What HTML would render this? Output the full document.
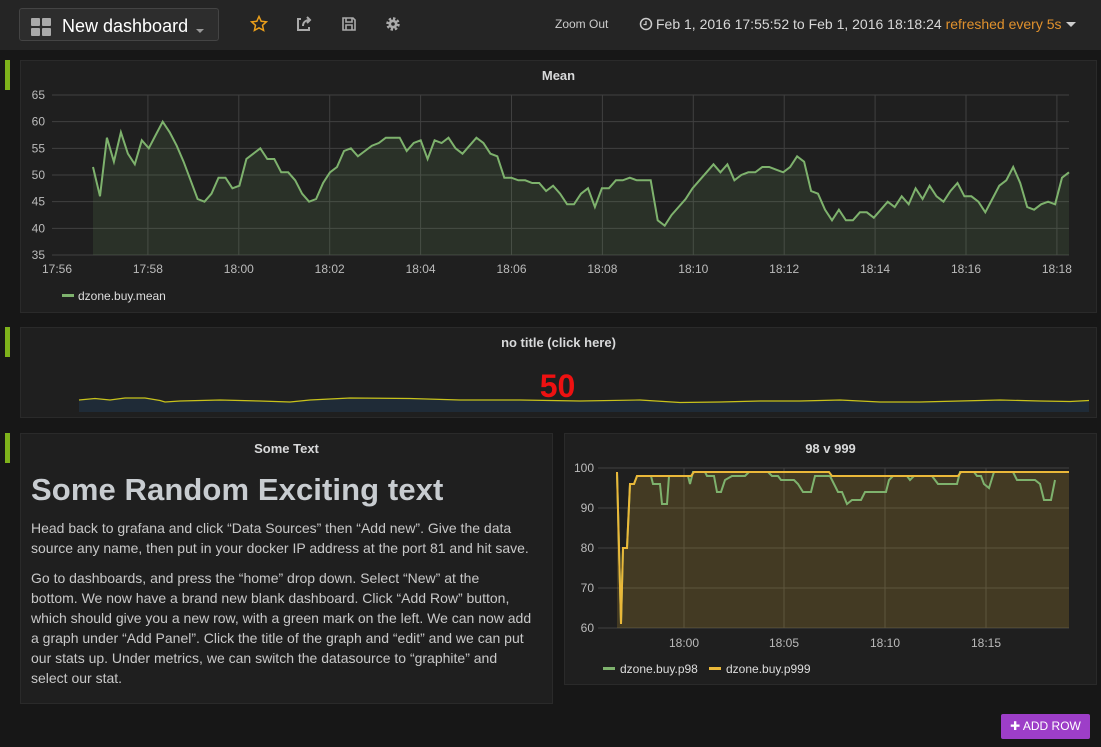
<!DOCTYPE html>
<html><head><meta charset="utf-8"><style>
*{margin:0;padding:0;box-sizing:border-box}
body{width:1101px;height:747px;background:#171717;font-family:"Liberation Sans",sans-serif;color:#c8c8c8;position:relative;overflow:hidden}
.top{position:absolute;left:0;top:0;width:1101px;height:50px;background:#252525}
.dd{position:absolute;left:19px;top:8px;width:200px;height:33px;border:1px solid #444;border-radius:3px;background:#2d2d2d}
.dd .t{position:absolute;left:42px;top:7px;font-size:18px;color:#fff}
.sq{position:absolute;width:9px;height:8px;background:#aaa;border-radius:1px}
.panel{position:absolute;background:#1f1f1f;border:1px solid #2a2a2a}
.mark{position:absolute;left:5px;width:5px;height:30px;background:#7eb21b}
.ttl{position:absolute;width:100%;text-align:center;font-weight:bold;font-size:13px;color:#d8d9da}
svg text{font-family:"Liberation Sans",sans-serif;font-size:12px;fill:#bbb}
p{font-size:14px;line-height:20px;color:#c8c8c8;white-space:nowrap}
</style></head><body>
<div class="top">
 <div class="dd">
  <div class="sq" style="left:11px;top:9px"></div><div class="sq" style="left:22px;top:9px"></div>
  <div class="sq" style="left:11px;top:19px"></div><div class="sq" style="left:22px;top:19px"></div>
  <div class="t">New dashboard</div>
  <div style="position:absolute;left:176px;top:20px;border-left:4px solid transparent;border-right:4px solid transparent;border-top:4px solid #999"></div>
 </div>
 <svg style="position:absolute;left:250px;top:15px" width="18" height="18" viewBox="0 0 18 18"><path d="M9 1.5l2.2 4.8 5.2.5-3.9 3.5 1.1 5.1L9 12.8l-4.6 2.6 1.1-5.1L1.6 6.8l5.2-.5z" fill="none" stroke="#eb9f1a" stroke-width="1.5"/></svg>
 <svg style="position:absolute;left:295px;top:15px" width="18" height="18" viewBox="0 0 18 18"><path d="M6 4H3v11h11v-3M8 11c0-4 3-6 7-6M12 2l3 3-3 3" fill="none" stroke="#aaa" stroke-width="2"/></svg>
 <svg style="position:absolute;left:340px;top:15px" width="18" height="18" viewBox="0 0 18 18"><path d="M3 3h10l2 2v10H3z M6 3v4h6V3 M6 10h6v5H6z" fill="none" stroke="#aaa" stroke-width="1.6"/></svg>
 <svg style="position:absolute;left:384px;top:15px" width="18" height="18" viewBox="0 0 18 18"><circle cx="9" cy="9" r="5" fill="none" stroke="#aaa" stroke-width="3.5" stroke-dasharray="2.2 1.7"/><circle cx="9" cy="9" r="4.5" fill="#aaa"/><circle cx="9" cy="9" r="1.8" fill="#252525"/></svg>
 <div style="position:absolute;left:555px;top:17px;font-size:12px;color:#ccc">Zoom Out</div>
 <svg style="position:absolute;left:639px;top:17px" width="14" height="14"><circle cx="7" cy="7" r="5.5" fill="none" stroke="#ccc" stroke-width="1.5"/><path d="M7 4v3.5H4.5" fill="none" stroke="#ccc" stroke-width="1.3"/></svg>
 <div style="position:absolute;left:656px;top:16px;font-size:14px;color:#d8d8d8;white-space:nowrap">Feb 1, 2016 17:55:52 to Feb 1, 2016 18:18:24 <span style="color:#e0912d">refreshed every 5s</span></div>
 <div style="position:absolute;left:1066px;top:22px;border-left:5px solid transparent;border-right:5px solid transparent;border-top:5px solid #ccc"></div>
</div>

<div class="mark" style="top:60px"></div>
<div class="panel" style="left:20px;top:60px;width:1077px;height:253px">
 <div class="ttl" style="top:7px">Mean</div>
</div>
<svg style="position:absolute;left:0;top:0" width="1101" height="320" id="s1"></svg>

<div class="mark" style="top:327px"></div>
<div class="panel" style="left:20px;top:327px;width:1077px;height:91px">
 <div class="ttl" style="top:7px">no title (click here)</div>
</div>
<svg style="position:absolute;left:0;top:320px" width="1101" height="100" id="s2"></svg>
<div style="position:absolute;left:0;width:1115px;top:368px;text-align:center;font-size:32px;font-weight:bold;color:#e11;">50</div>

<div class="mark" style="top:433px"></div>
<div class="panel" style="left:20px;top:433px;width:533px;height:271px">
 <div class="ttl" style="top:7px">Some Text</div>
 <div style="position:absolute;left:10px;top:38px;font-size:31px;font-weight:bold;color:#c8ccd0;letter-spacing:0.1px">Some Random Exciting text</div>
 <div style="position:absolute;left:10px;top:84px;width:520px">
  <p>Head back to grafana and click “Data Sources” then “Add new”. Give the data<br>source any name, then put in your docker IP address at the port 81 and hit save.</p>
  <p style="margin-top:10px">Go to dashboards, and press the “home” drop down. Select “New” at the<br>bottom. We now have a brand new blank dashboard. Click “Add Row” button,<br>which should give you a new row, with a green mark on the left. We can now add<br>a graph under “Add Panel”. Click the title of the graph and “edit” and we can put<br>our stats up. Under metrics, we can switch the datasource to “graphite” and<br>select our stat.</p>
 </div>
</div>
<div class="panel" style="left:564px;top:433px;width:533px;height:252px">
 <div class="ttl" style="top:7px">98 v 999</div>
</div>
<svg style="position:absolute;left:0;top:420px" width="1101" height="280" id="s3"></svg>

<div style="position:absolute;left:1001px;top:714px;width:89px;height:25px;background:#9d3ec8;border-radius:2px;color:#fff;font-size:12px;line-height:25px;text-align:center">✚ ADD ROW</div>

<script>
var NS='http://www.w3.org/2000/svg';
function el(svg,tag,a,txt){var e=document.createElementNS(NS,tag);for(var k in a)e.setAttribute(k,a[k]);if(txt!==undefined)e.textContent=txt;svg.appendChild(e);return e;}
var s1=document.getElementById('s1');
var Y1=function(v){return 255-(v-35)*5.333;};
el(s1,'rect',{x:57,y:95,width:1012,height:160,fill:'#1f1f1f'});
for(var v=35;v<=65;v+=5){var y=Y1(v);el(s1,'line',{x1:52,x2:1069,y1:y,y2:y,stroke:'#404040'});el(s1,'text',{x:45,y:y+4,'text-anchor':'end'},v);}
var xl=['17:56','17:58','18:00','18:02','18:04','18:06','18:08','18:10','18:12','18:14','18:16','18:18'];
for(var i=0;i<12;i++){var x=57+i*90.9;if(i>0)el(s1,'line',{x1:x,x2:x,y1:95,y2:255,stroke:'#404040'});el(s1,'text',{x:x,y:273,'text-anchor':'middle'},xl[i]);}
var d1=[51.5,46,57,52.5,58,54,52,56.5,55,57.5,60,58,55.5,52.5,49,45.5,45,46.5,49.5,49.5,47.5,48,53,54,55,53,53,50.5,50.5,49,46.5,45,45.5,48.5,50.5,51.5,54.5,55,53.5,54.5,55.5,56,57,57,57,54.5,56,56.5,53,56.5,56,57,55,54,55.5,57,56,54,53.5,49.5,49.5,49,49,48.5,48.5,47,48,46.5,44.5,44.5,46.5,47.5,44,47.5,47.5,49,49,49.5,49,49,49,41.5,40.5,42.5,44,45.5,47.5,49,50.5,52,50.5,52,49,50,50.5,50.5,51.5,51.5,51,50.5,51.5,53.5,52.5,47,46.5,43.5,41.5,43.5,41.5,41.5,43,43,42,43.5,45,44,46,44.5,47.5,45.5,48,46,45,47,48.5,46,46,45,43,45.5,48,49,51.5,48.5,44,43.5,44.5,45,44.5,49.5,50.5];
var step=(1069-93)/(d1.length-1),p='';
d1.forEach(function(v,i){p+=(i?'L':'M')+(93+i*step).toFixed(1)+' '+Y1(v).toFixed(1);});
el(s1,'path',{d:p+'L1069 255L93 255Z',fill:'rgba(126,178,109,0.12)'});
el(s1,'path',{d:p,fill:'none',stroke:'#7eb26d','stroke-width':2});
el(s1,'rect',{x:62,y:294,width:12,height:3,fill:'#7eb26d'});
el(s1,'text',{x:78,y:300,style:'font-size:12px;fill:#ddd'},'dzone.buy.mean');
var s2=document.getElementById('s2');
var sp=[[79,80],[95,78.5],[110,80],[125,78],[145,78],[160,80.5],[165,82],[180,81],[220,80],[260,81],[290,82],[310,80],[330,79],[350,78],[410,78.5],[460,80],[520,80],[580,81],[640,80],[680,82.5],[720,82],[760,81],[800,81],[840,80],[880,82],[920,82],[960,81],[1000,80],[1040,81],[1070,81.5],[1089,80.5]];
var q='';sp.forEach(function(a,i){q+=(i?'L':'M')+a[0]+' '+a[1];});
el(s2,'path',{d:q+'L1089 92L79 92Z',fill:'#1f2b37'});
el(s2,'path',{d:q,fill:'none',stroke:'#c8c21b','stroke-width':1.2});
var s3=document.getElementById('s3');
var Y3=function(v){return 48+(100-v)*4;};
el(s3,'rect',{x:598,y:48,width:471,height:160,fill:'#1f1f1f'});
for(var v=60;v<=100;v+=10){var y=Y3(v);el(s3,'line',{x1:598,x2:1069,y1:y,y2:y,stroke:'#404040'});el(s3,'text',{x:594,y:y+4,'text-anchor':'end'},v);}
var xl3=[[684,'18:00'],[784,'18:05'],[885,'18:10'],[986,'18:15']];
xl3.forEach(function(a){el(s3,'line',{x1:a[0],x2:a[0],y1:48,y2:208,stroke:'#404040'});el(s3,'text',{x:a[0],y:227,'text-anchor':'middle'},a[1]);});
var p999=[[617,99],[621,61],[623,80],[627,80],[630,96],[634,96],[637,98],[691,98],[694,99],[829,99],[832,98],[958,98],[961,99],[1069,99]];
var p98=[[617,99],[621,61],[623,80],[627,80],[630,96],[634,96],[637,98],[651,98],[653,96],[660,96],[662,91],[667,91],[669,98],[688,98],[690,96],[693,99],[705,99],[707,98],[714,98],[717,94],[721,94],[725,97],[732,98],[745,98],[749,99],[768,99],[772,98],[778,98],[781,97],[794,97],[798,96],[803,94],[811,94],[815,98],[830,98],[834,96],[838,94],[842,94],[847,91],[852,92],[861,92],[865,94],[886,94],[889,97],[893,98],[907,98],[910,97],[914,98],[932,98],[938,96],[957,96],[960,99],[974,99],[977,98],[981,98],[984,96],[989,95],[994,99],[1013,99],[1017,97],[1035,97],[1040,96],[1044,92],[1051,92],[1055,97]];
function pp(a){var s='';a.forEach(function(b,i){s+=(i?'L':'M')+b[0]+' '+Y3(b[1]).toFixed(1);});return s;}
var a999=pp(p999);
el(s3,'path',{d:a999+'L1069 208L617 208Z',fill:'rgba(234,184,57,0.18)'});
el(s3,'path',{d:pp(p98),fill:'none',stroke:'#7eb26d','stroke-width':2});
el(s3,'path',{d:a999,fill:'none',stroke:'#eab839','stroke-width':2});
el(s3,'rect',{x:603,y:247,width:12,height:3,fill:'#7eb26d'});
el(s3,'text',{x:620,y:253,style:'font-size:12px;fill:#ddd'},'dzone.buy.p98');
el(s3,'rect',{x:709,y:247,width:12,height:3,fill:'#eab839'});
el(s3,'text',{x:726,y:253,style:'font-size:12px;fill:#ddd'},'dzone.buy.p999');
</script>
</body></html>
